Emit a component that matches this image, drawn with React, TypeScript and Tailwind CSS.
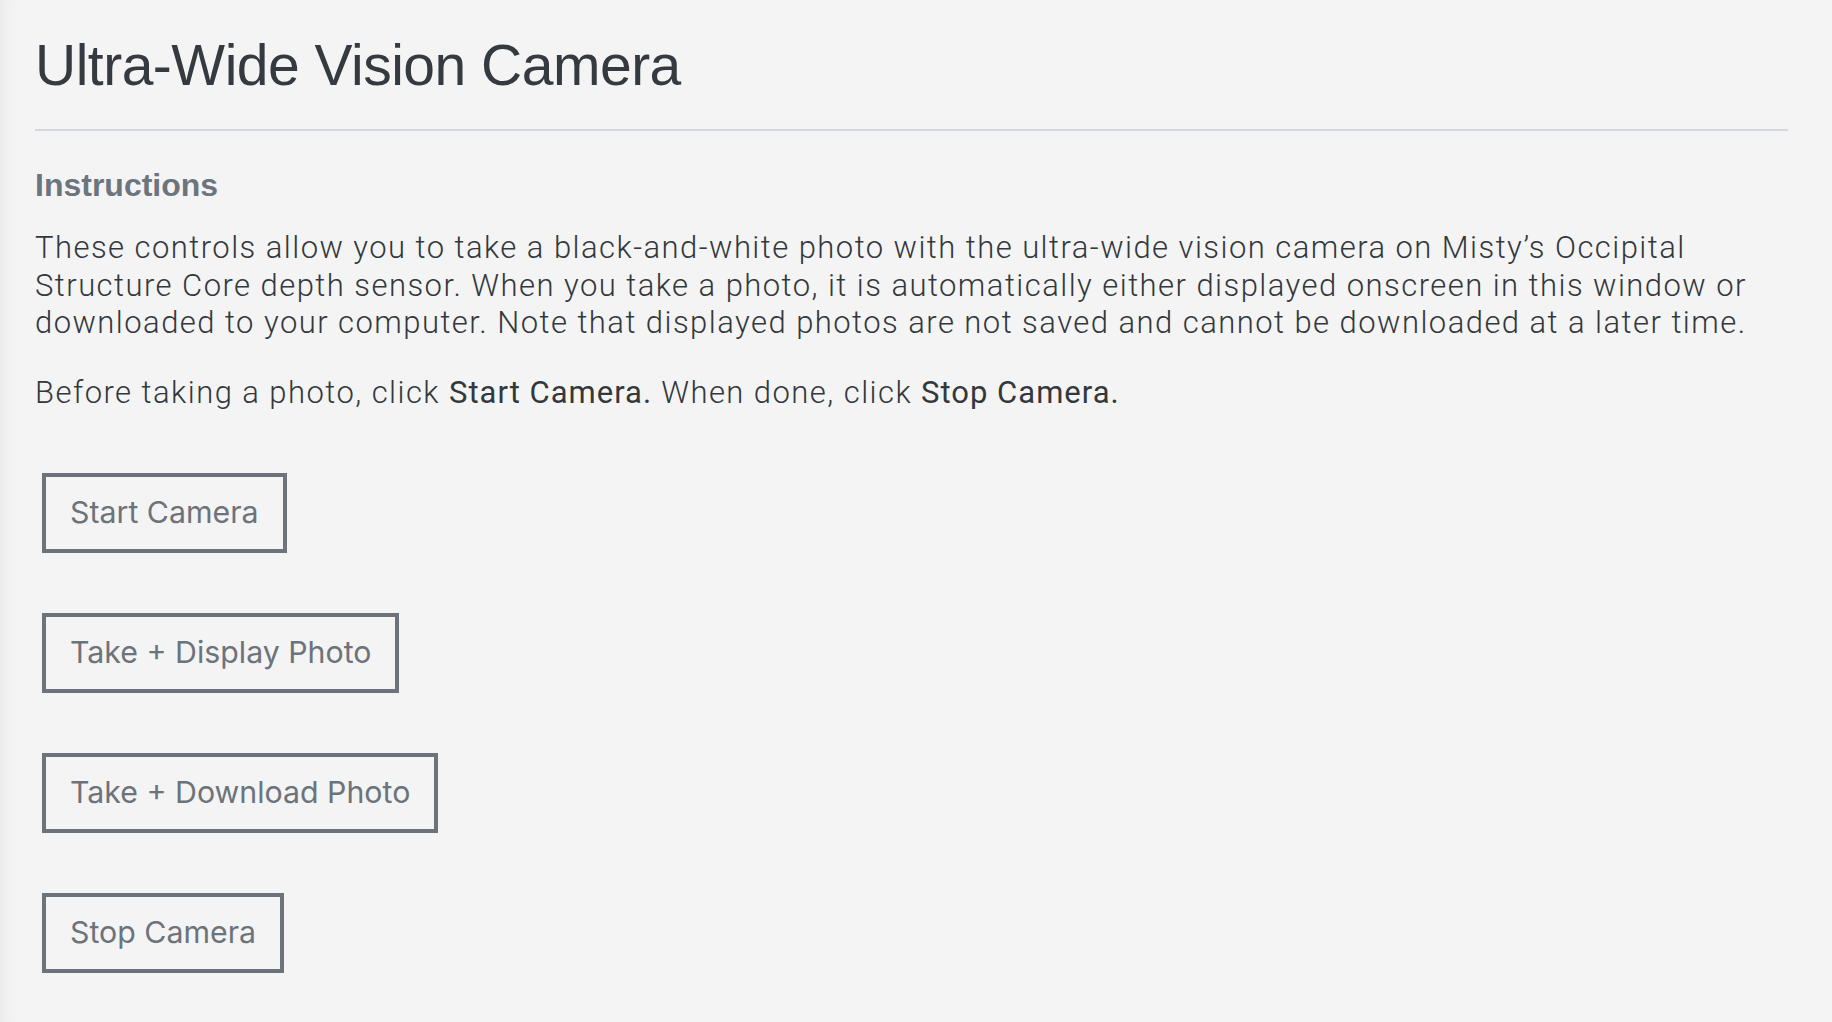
import React from "react";

const buttons = [
  "Start Camera",
  "Take + Display Photo",
  "Take + Download Photo",
  "Stop Camera",
];

const CameraButton = ({ label }: { label: string }) => (
  <button
    type="button"
    className="h-[80px] flex items-center pl-[24px] pr-[24px] border-4 border-[#6c737a] text-[#6c737a] text-[30.3px] font-['Inter',sans-serif] hover:bg-white/60 transition-colors"
  >
    {label}
  </button>
);

export default function App() {
  return (
    <div className="min-h-screen bg-[#f4f4f4] shadow-[inset_14px_0_18px_-14px_rgba(0,0,0,0.08)]">
      <div className="px-[35px] pr-[44px] pt-[37px] pb-[50px]">
        <h1 className="text-[57px] leading-none text-[#343a40] font-['Liberation_Sans',sans-serif] tracking-[-0.5px]">
          Ultra-Wide Vision Camera
        </h1>
        <hr className="mt-[35px] border-0 border-t-2 border-[#d4d8dc]" />

        <h3 className="mt-[38px] text-[32px] leading-none font-bold text-[#6c757d] font-['Liberation_Sans',sans-serif]">
          Instructions
        </h3>

        <div className="mt-[28px] text-[#33383d] font-['Roboto',sans-serif] font-light text-[31px] leading-[37.5px] tracking-[1.45px]">
          <p>
            These controls allow you to take a black-and-white photo with the
            ultra-wide vision camera on Misty’s Occipital Structure Core depth
            sensor. When you take a photo, it is automatically either displayed
            onscreen in this window or downloaded to your computer. Note that
            displayed photos are not saved and cannot be downloaded at a later
            time.
          </p>
          <p className="mt-[32px]">
            Before taking a photo, click{" "}
            <span className="font-normal tracking-[1px]">Start Camera.</span> When done, click{" "}
            <span className="font-normal tracking-[1px]">Stop Camera.</span>
          </p>
        </div>

        <div className="mt-[62px] ml-[7px] flex flex-col items-start gap-[60px]">
          {buttons.map((label) => (
            <CameraButton key={label} label={label} />
          ))}
        </div>
      </div>
    </div>
  );
}
